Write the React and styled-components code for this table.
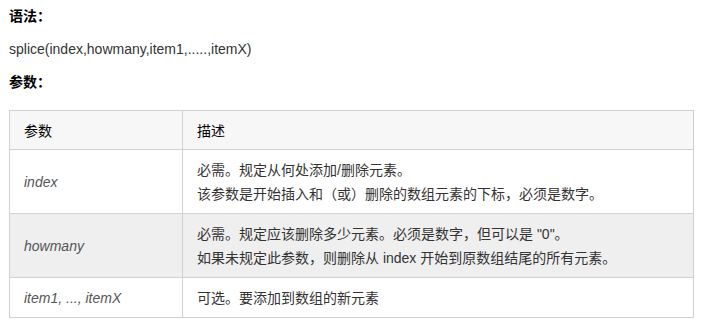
import React from 'react'
import styled, { createGlobalStyle } from 'styled-components'

const GlobalStyle = createGlobalStyle`
  body {
    margin: 0;
    background: #fff;
    font-family: "Liberation Sans", "Noto Sans CJK SC", sans-serif;
    font-size: 14px;
    color: #333;
  }
`

const params = [
  { name: 'index', lines: ['必需。规定从何处添加/删除元素。', '该参数是开始插入和（或）删除的数组元素的下标，必须是数字。'] },
  { name: 'howmany', lines: ['必需。规定应该删除多少元素。必须是数字，但可以是 "0"。', '如果未规定此参数，则删除从 index 开始到原数组结尾的所有元素。'], shaded: true },
  { name: 'item1, ..., itemX', lines: ['可选。要添加到数组的新元素'] },
]

export default function App() {
  return (
    <Page>
      <GlobalStyle />
      <Label>语法：</Label>
      <Code>splice(index,howmany,item1,.....,itemX)</Code>
      <Label>参数：</Label>
      <Table>
        <colgroup>
          <col style={{ width: 173 }} />
          <col />
        </colgroup>
        <thead>
          <tr>
            <Th>参数</Th>
            <Th>描述</Th>
          </tr>
        </thead>
        <tbody>
          {params.map(p => (
            <Row key={p.name} $shaded={p.shaded}>
              <NameCell>{p.name}</NameCell>
              <Td>
                {p.lines.map(line => <Line key={line}>{line}</Line>)}
              </Td>
            </Row>
          ))}
        </tbody>
      </Table>
    </Page>
  )
}

const Page = styled.div`
  padding: 7px 9px 8px 9px;
  width: 685px;
`

const Label = styled.p`
  margin: 0 0 14px;
  font-weight: bold;
  color: #000;
  line-height: 19px;
`

const Code = styled.p`
  margin: 0 0 14px;
  line-height: 19px;
`

const Table = styled.table`
  width: 685px;
  table-layout: fixed;
  border-collapse: collapse;
  border: 1px solid #d0d0d0;
  margin-top: 18px;
`

const Th = styled.th`
  background: #f7f7f7;
  text-align: left;
  font-weight: normal;
  color: #000;
  height: 39px;
  padding: 0 14px;
  border: 1px solid #d0d0d0;
  box-sizing: border-box;
`

const Row = styled.tr`
  background: ${p => (p.$shaded ? '#efefef' : '#fff')};
`

const Td = styled.td`
  padding: 8px 14px 7px;
  border: 1px solid #d0d0d0;
  vertical-align: middle;
  line-height: 24px;
`

const NameCell = styled(Td)`
  font-style: italic;
  color: #555;
  height: 22px;
`

const Line = styled.div``
